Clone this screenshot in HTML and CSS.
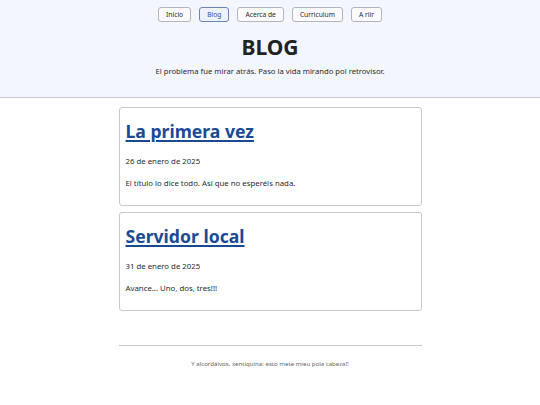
FILE: index.html
```html
<!DOCTYPE html>
<html lang="es">
<head>
<meta charset="utf-8">
<title>Blog</title>
<link rel="stylesheet" href="styles.css">
</head>
<body>
<header class="site-header">
  <nav class="nav">
    <a class="nav-btn" href="#">Inicio</a>
    <a class="nav-btn active" href="#">Blog</a>
    <a class="nav-btn" href="#">Acerca de</a>
    <a class="nav-btn" href="#">Curriculum</a>
    <a class="nav-btn" href="#">A riir</a>
  </nav>
  <h1 class="site-title">BLOG</h1>
  <p class="tagline">El problema fue mirar atrás. Paso la vida mirando pol retrovisor.</p>
</header>
<main class="posts">
  <article class="card">
    <h2 class="card-title"><a href="#">La primera vez</a></h2>
    <p class="card-date">26 de enero de 2025</p>
    <p class="card-text">El título lo dice todo. Así que no esperéis nada.</p>
  </article>
  <article class="card">
    <h2 class="card-title"><a href="#">Servidor local</a></h2>
    <p class="card-date">31 de enero de 2025</p>
    <p class="card-text">Avance... Uno, dos, tres!!!</p>
  </article>
</main>
<footer class="site-footer">
  <p>Y alcordáivos, xentiquina: esto mete mieu pola cabeza!!</p>
</footer>
</body>
</html>
```

FILE: styles.css
```css
html, body {
  margin: 0;
  padding: 0;
  background: #ffffff;
  color: #222222;
  font-family: "Noto Sans", "Open Sans", sans-serif;
}

.site-header {
  background: #f4f6fe;
  border-bottom: 1px solid #c9c9d2;
  padding: 7px 0 0;
  height: 90px;
  text-align: center;
}

.nav {
  display: flex;
  justify-content: center;
  gap: 8px;
}

.nav-btn {
  display: block;
  font-size: 6.7px;
  line-height: 13px;
  height: 13px;
  padding: 0 7px;
  border: 1px solid #b4b4be;
  border-radius: 3px;
  background: #fbfbfd;
  color: #2a2a2a;
  text-decoration: none;
}

.nav-btn.active {
  border-color: #6d84b8;
  color: #1e4f9c;
  background: #eef2fc;
}

.site-title {
  margin: 12px 0 0;
  font-size: 21px;
  line-height: 26px;
  font-weight: 700;
  color: #222222;
}

.tagline {
  margin: 6px 0 0;
  font-size: 7.7px;
  line-height: 11px;
  color: #2a2a2a;
}

.posts {
  width: 303px;
  margin: 9px auto 0;
  display: flex;
  flex-direction: column;
  gap: 6px;
}

.card {
  border: 1px solid #c8c8cc;
  border-radius: 3px;
  padding: 10px 6px 8px;
  height: 79px;
}

.card-title {
  margin: 0;
  font-size: 17.6px;
  line-height: 26px;
  font-weight: 700;
}

.card-title a {
  color: #1b4a94;
  text-decoration: underline;
  text-decoration-thickness: 2px;
  text-underline-offset: 2px;
}

.card-date {
  margin: 12px 0 0;
  font-size: 7.8px;
  line-height: 11px;
  color: #2a2a2a;
}

.card-text {
  margin: 11px 0 0;
  font-size: 7.8px;
  line-height: 11px;
  color: #2a2a2a;
}

.site-footer {
  width: 303px;
  margin: 34px auto 0;
  border-top: 1px solid #c8c8cc;
  text-align: center;
}

.site-footer p {
  margin: 13px 0 0;
  font-size: 6.1px;
  line-height: 9px;
  color: #666666;
}
```
